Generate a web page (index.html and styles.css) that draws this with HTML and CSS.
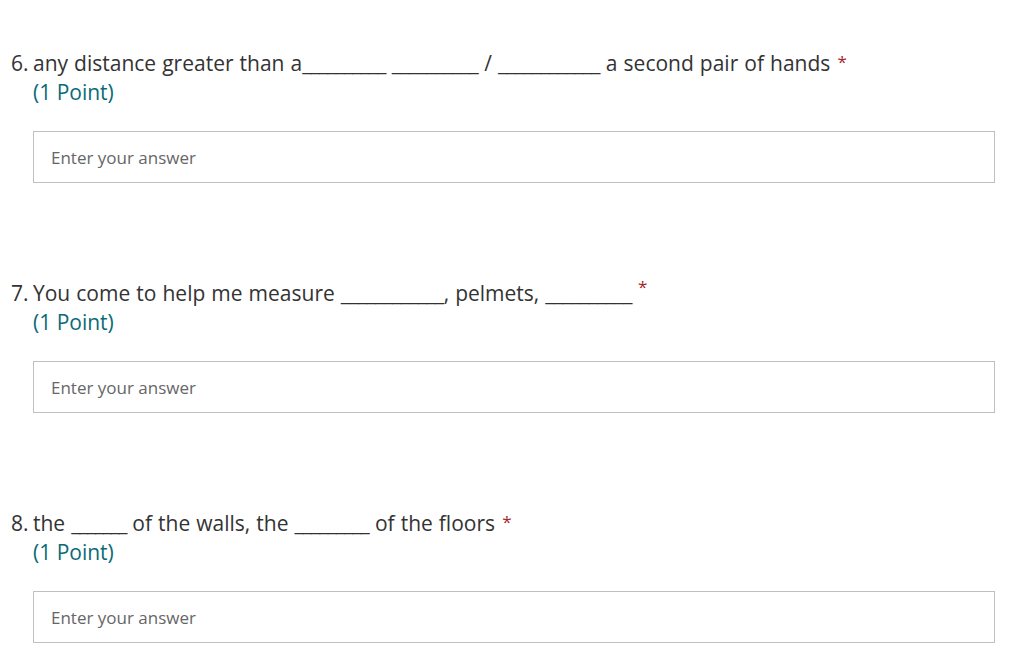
FILE: index.html
```html
<!DOCTYPE html>
<html lang="en">
<head>
<meta charset="utf-8">
<title>Form</title>
<link rel="stylesheet" href="styles.css">
</head>
<body>
<main class="form">
  <section class="question">
    <div class="title">
      <span class="num">6.</span>
      <span class="text">any distance greater than a<span class="blank b80">__________</span> <span class="blank b83">__________</span> / <span class="blank b100">____________</span> a second pair of hands <span class="req">*</span></span>
    </div>
    <div class="points">(1 Point)</div>
    <div class="answer">Enter your answer</div>
  </section>
  <section class="question">
    <div class="title">
      <span class="num">7.</span>
      <span class="text">You come to help me measure <span class="blank b101">____________</span>, pelmets, <span class="blank b83">__________</span> <span class="req raised">*</span></span>
    </div>
    <div class="points">(1 Point)</div>
    <div class="answer">Enter your answer</div>
  </section>
  <section class="question">
    <div class="title">
      <span class="num">8.</span>
      <span class="text">the <span class="blank b54">_______</span> of the walls, the <span class="blank b73">_________</span> of the floors <span class="req">*</span></span>
    </div>
    <div class="points">(1 Point)</div>
    <div class="answer">Enter your answer</div>
  </section>
</main>
</body>
</html>
```
FILE: styles.css
```css
html, body {
  margin: 0;
  padding: 0;
  background: #ffffff;
}
body {
  font-family: "Open Sans", "Noto Sans", sans-serif;
  color: #333333;
  width: 1023px;
  height: 671px;
  overflow: hidden;
}
.form {
  display: flex;
  flex-direction: column;
  gap: 96px;
  padding: 49px 28px 0 11px;
}
.question {
  display: flex;
  flex-direction: column;
}
.title {
  display: flex;
  font-size: 21px;
  line-height: 28px;
}
.num {
  width: 22px;
  flex: none;
}
.text {
  white-space: nowrap;
  word-spacing: 0.6px;
}
.b80 { letter-spacing: -0.85px; }
.b83 { letter-spacing: -0.55px; }
.b100 { letter-spacing: -0.72px; }
.b101 { letter-spacing: -0.63px; }
.b54 { letter-spacing: -1.34px; }
.b73 { letter-spacing: -0.94px; }
.req {
  color: #a4262c;
  font-size: 17px;
  line-height: 17px;
  position: relative;
  top: -3px;
  margin-left: 1px;
}
.req.raised {
  top: -8px;
  margin-left: 0;
}
.points {
  padding-left: 22px;
  font-size: 21px;
  line-height: 30px;
  color: #0b6a78;
}
.answer {
  margin: 24px 0 0 22px;
  height: 50px;
  border: 1px solid #c0c0c0;
  box-sizing: content-box;
  padding: 0 17px;
  display: flex;
  align-items: center;
  font-size: 17px;
  color: #666666;
}
```
